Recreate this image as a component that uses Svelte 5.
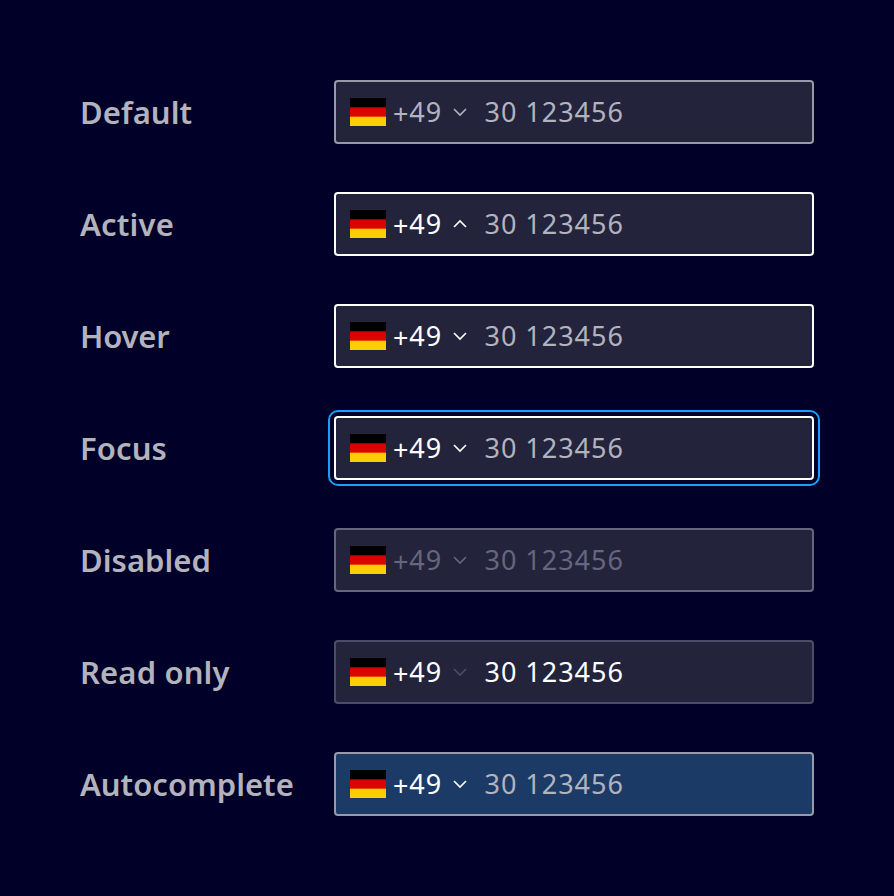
<script>
  const rows = [
    { label: 'Default', state: 'default', spacing: 0.1 },
    { label: 'Active', state: 'active', spacing: 0.2 },
    { label: 'Hover', state: 'hover', spacing: -0.2 },
    { label: 'Focus', state: 'focus', spacing: 0.1 },
    { label: 'Disabled', state: 'disabled', spacing: 0.05 },
    { label: 'Read only', state: 'readonly', spacing: 0.15 },
    { label: 'Autocomplete', state: 'autocomplete', spacing: 0 }
  ];
</script>

<main>
  {#each rows as row}
    <div class="row">
      <span class="label" style="letter-spacing: {row.spacing}px">{row.label}</span>
      <div class="field {row.state}">
        <svg class="flag" width="36" height="28" viewBox="0 0 36 28" aria-hidden="true">
          <rect width="36" height="28" fill="#000" />
          <rect y="9.33" width="36" height="18.67" fill="#d00" />
          <rect y="18.67" width="36" height="9.33" fill="#ffce00" />
        </svg>
        <span class="code"><span class="plus">+</span>49</span>
        <svg class="chevron" width="16" height="16" viewBox="0 0 16 16" aria-hidden="true">
          <path d={row.state === 'active' ? 'M2 11 8 5l6 6' : 'M2 5l6 6 6-6'} />
        </svg>
        <span class="number">30 123456</span>
      </div>
    </div>
  {/each}
</main>

<style>
  :global(body) {
    background: #000028;
  }
  main {
    box-sizing: border-box;
    height: 896px;
    padding: 80px;
    display: flex;
    flex-direction: column;
    gap: 48px;
    background: #000028;
    font-family: 'Noto Sans', sans-serif;
  }
  .row {
    display: flex;
    height: 64px;
    align-items: center;
  }
  .label {
    width: 254px;
    flex: none;
    white-space: nowrap;
    font-size: 31px;
    font-weight: 600;
    line-height: 64px;
    color: #b3b3be;
  }
  .field {
    --border: #9999a9;
    --code: #b3b3be;
    --icon: #b3b3be;
    --number: #b3b3be;
    box-sizing: border-box;
    width: 480px;
    height: 64px;
    display: flex;
    align-items: center;
    padding-left: 14px;
    border: 2px solid var(--border);
    border-radius: 4px;
    background: #23233c;
    font-size: 27px;
    font-weight: 400;
    line-height: 60px;
    white-space: nowrap;
  }
  .active,
  .hover,
  .focus {
    --border: #fff;
    --code: #fff;
    --icon: #fff;
  }
  .focus {
    outline: 2px solid #199fff;
    outline-offset: 4px;
  }
  .disabled {
    --border: #66667e;
    --code: #66667e;
    --icon: #66667e;
    --number: #66667e;
  }
  .readonly {
    --border: #4c4c68;
    --code: #fff;
    --icon: #4c4c68;
    --number: #fff;
  }
  .autocomplete {
    --code: #fff;
    --icon: #fff;
    background: #1b3a65;
  }
  .flag {
    flex: none;
  }
  .code {
    width: 59px;
    margin-left: 7px;
    letter-spacing: 0.9px;
    color: var(--code);
  }
  .plus {
    display: inline-block;
    line-height: 1;
    transform: translateY(1.5px);
  }
  .chevron {
    flex: none;
    fill: none;
    stroke: var(--icon);
    stroke-width: 1.6;
  }
  .number {
    margin-left: 16.5px;
    letter-spacing: 0.98px;
    color: var(--number);
  }
</style>
